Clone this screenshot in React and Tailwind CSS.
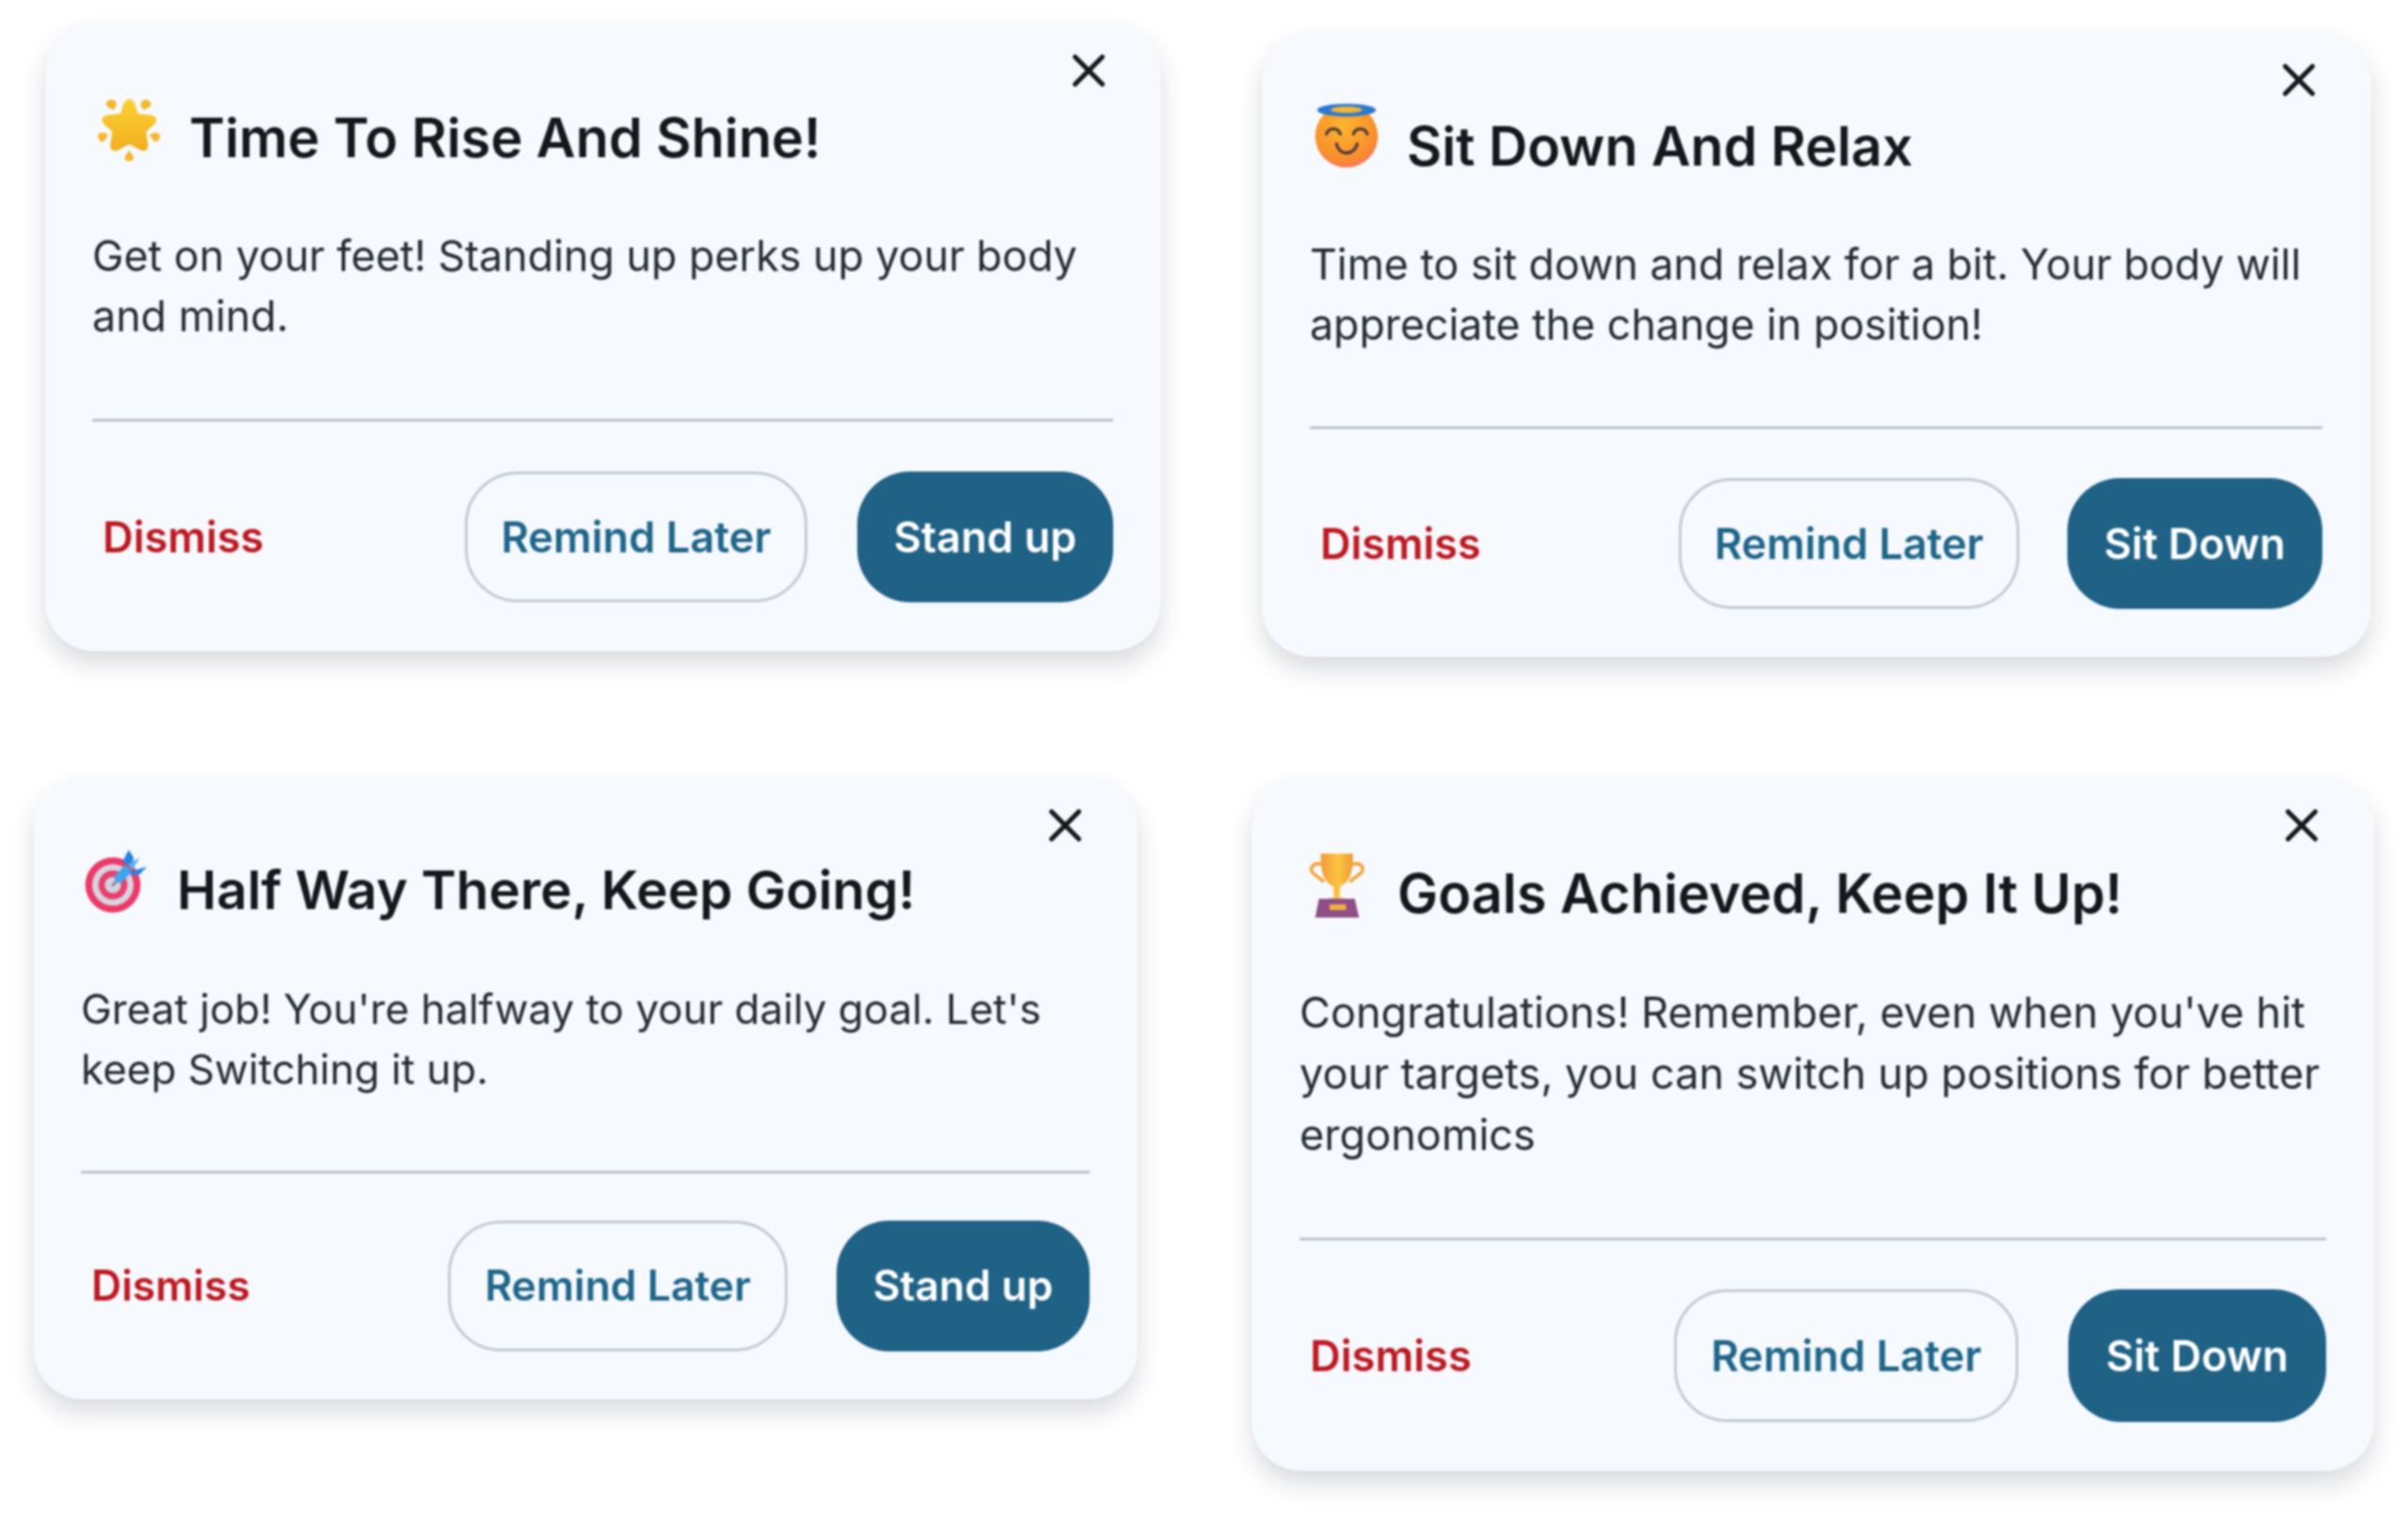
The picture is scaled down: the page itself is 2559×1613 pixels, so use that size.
import React from "react";
import { X } from "lucide-react";

const StarIcon = () => (
  <svg viewBox="54 36 216 216" className="w-[72px] h-[72px] shrink-0 overflow-visible">
    <defs>
      <linearGradient id="starFill" x1="0" y1="0" x2="0" y2="1">
        <stop offset="0" stopColor="#f9d235" />
        <stop offset="1" stopColor="#f3ae1f" />
      </linearGradient>
    </defs>
    <path
      d="M172 46 C184 46 190 60 194 72 L200 92 L240 97 C260 100 264 114 252 126 L226 150 L232 188 C234 208 222 216 206 208 L172 190 L138 208 C122 216 110 208 112 188 L118 150 L92 126 C80 114 84 100 104 97 L144 92 L150 72 C154 60 160 46 172 46 Z"
      fill="url(#starFill)"
    />
    <path d="M98 62 C100 48 118 44 126 52 C134 60 132 70 122 80 C112 76 102 72 98 62 Z" fill="#f4b82b" />
    <path d="M242 62 C240 48 222 44 214 52 C206 60 208 70 218 80 C228 76 238 72 242 62 Z" fill="#f4b82b" />
    <path d="M72 160 C80 150 96 152 104 160 C100 172 92 182 84 182 C76 180 72 170 72 160 Z" fill="#f4b82b" />
    <path d="M270 160 C262 150 246 152 238 160 C242 172 250 182 258 182 C266 180 270 170 270 160 Z" fill="#f4b82b" />
    <path d="M172 210 C178 218 188 230 186 238 C180 246 164 246 158 238 C156 230 166 218 172 210 Z" fill="#f4b82b" />
  </svg>
);

const HaloIcon = () => (
  <svg viewBox="63 54 216 216" className="w-[72px] h-[72px] shrink-0 overflow-visible">
    <defs>
      <radialGradient id="faceFill" cx="0.45" cy="0.35" r="0.75">
        <stop offset="0" stopColor="#fdb52f" />
        <stop offset="0.7" stopColor="#f98e2c" />
        <stop offset="1" stopColor="#f5627a" />
      </radialGradient>
    </defs>
    <circle cx="180" cy="155" r="100" fill="url(#faceFill)" />
    <ellipse cx="180" cy="72" rx="94" ry="20" fill="#2a78d2" />
    <ellipse cx="180" cy="71" rx="50" ry="10" fill="#f7b733" />
    <path d="M116 148 C124 126 152 126 160 148" fill="none" stroke="#4f3a3c" strokeWidth="10" strokeLinecap="round" />
    <path d="M202 148 C210 126 238 126 246 148" fill="none" stroke="#4f3a3c" strokeWidth="10" strokeLinecap="round" />
    <path d="M148 180 C156 218 204 218 214 180" fill="none" stroke="#4f3a3c" strokeWidth="10" strokeLinecap="round" />
  </svg>
);

const TargetIcon = () => (
  <svg viewBox="48 45 216 216" className="w-[72px] h-[72px] shrink-0 overflow-visible">
    <circle cx="150" cy="160" r="88" fill="#ec3a68" />
    <circle cx="150" cy="160" r="66" fill="#d9d3e0" />
    <circle cx="150" cy="160" r="46" fill="#e8406c" />
    <circle cx="150" cy="160" r="26" fill="#d5d0dc" />
    <path d="M150 160 L190 120" stroke="#8c8fa8" strokeWidth="10" strokeLinecap="round" />
    <path d="M156 130 L190 96 L212 118 L176 152 C164 156 152 146 156 130 Z" fill="#3ea6ec" />
    <path d="M180 88 L200 48 L216 72 L212 100 Z" fill="#2384e6" />
    <path d="M204 118 L258 102 L236 126 L214 128 Z" fill="#2384e6" />
    <path d="M198 96 L236 72 L212 112 Z" fill="#56b0f0" />
  </svg>
);

const TrophyIcon = () => (
  <svg viewBox="30 30 216 216" className="w-[72px] h-[72px] shrink-0 overflow-visible">
    <defs>
      <linearGradient id="cupFill" x1="0" y1="0" x2="1" y2="0">
        <stop offset="0" stopColor="#f29a38" />
        <stop offset="0.55" stopColor="#fcc53f" />
        <stop offset="1" stopColor="#ef9a36" />
      </linearGradient>
    </defs>
    <path d="M100 70 C66 62 58 92 80 104 L108 126" fill="none" stroke="#f3a53c" strokeWidth="11" />
    <path d="M198 70 C236 62 240 92 218 104 L190 126" fill="none" stroke="#f3a53c" strokeWidth="11" />
    <path d="M98 36 H200 C202 92 192 128 160 140 L158 178 H140 L138 140 C106 128 96 92 98 36 Z" fill="url(#cupFill)" />
    <path d="M126 178 H172 L176 186 H122 Z" fill="#f0a030" />
    <path d="M92 180 H206 L220 240 H80 Z" fill="#8f4f86" />
    <rect x="126" y="198" width="52" height="18" fill="#f0b23c" />
  </svg>
);

const NudgeCard = ({ className, headClass, titleClass, bodyClass, lineClass, rowClass, remindClass, actionClass, icon, title, body, action }) => (
  <div className={`relative shrink-0 flex flex-col bg-[#f6f9fe] rounded-[52px] shadow-[0_14px_26px_rgba(40,50,70,0.17),0_1px_3px_rgba(40,50,70,0.05)] font-['Inter',sans-serif] ${className}`}>
    <button className="absolute top-[22px] right-[48px] text-[#15181c]">
      <X size={58} strokeWidth={2.1} />
    </button>

    <div className={`flex items-start ${headClass}`}>
      {icon}
      <h3 className={`mt-[9px] leading-[70px] font-semibold text-[#14171b] ${titleClass}`}>
        {title}
      </h3>
    </div>

    <p className={`mt-[59px] text-[#262b31] ${bodyClass}`}>{body}</p>

    <div className={`h-[3px] shrink-0 bg-[#bfc4cd] ${lineClass}`} />

    <div className={`flex items-center justify-between ${rowClass}`}>
      <button className="pl-[11px] font-semibold text-[#bd1a22]">Dismiss</button>
      <div className="flex items-center">
        <button className={`rounded-[56px] border-[3px] border-[#c5cad2] font-semibold text-[#1f6689] ${remindClass}`}>
          Remind Later
        </button>
        <button className={`rounded-[56px] bg-[#1f6286] font-semibold text-white ${actionClass}`}>
          {action}
        </button>
      </div>
    </div>
  </div>
);

export default function App() {
  return (
    <div className="w-[2559px] h-[1613px] bg-white overflow-hidden">
      <div className="blur-[0.8px]">
        <div className="flex items-start">
          <NudgeCard
            className="ml-[48px] mt-[24px] w-[1186px] pl-[50px] pr-[51px] pt-[78px] pb-[52px]"
            headClass="gap-[31px]"
            titleClass="text-[57.5px]"
            bodyClass="text-[44.8px] leading-[64px]"
            lineClass="mt-[77px] mb-[53px]"
            rowClass="text-[45.2px]"
            remindClass="w-[364px] h-[139px]"
            actionClass="ml-[53px] w-[272px] h-[139px]"
            icon={<StarIcon />}
            title="Time To Rise And Shine!"
            body="Get on your feet! Standing up perks up your body and mind."
            action="Stand up"
          />
          <NudgeCard
            className="ml-[107px] mt-[34px] w-[1179px] pl-[51px] pr-[52px] pt-[77px] pb-[51px]"
            headClass="gap-[31px]"
            titleClass="text-[57.3px]"
            bodyClass="text-[44.7px] leading-[64px]"
            lineClass="mt-[76px] mb-[52px]"
            rowClass="text-[45px]"
            remindClass="w-[362px] h-[139px]"
            actionClass="ml-[51px] w-[271px] h-[139px]"
            icon={<HaloIcon />}
            title="Sit Down And Relax"
            body="Time to sit down and relax for a bit. Your body will appreciate the change in position!"
            action="Sit Down"
          />
        </div>
        <div className="flex items-start mt-[128px]">
          <NudgeCard
            className="ml-[36px] w-[1173px] pl-[50px] pr-[51px] pt-[76px] pb-[51px]"
            headClass="gap-[30px]"
            titleClass="text-[56.6px]"
            bodyClass="text-[44px] leading-[64px]"
            lineClass="mt-[76px] mb-[50px]"
            rowClass="text-[44.5px]"
            remindClass="w-[361px] h-[139px]"
            actionClass="ml-[52px] w-[269px] h-[139px]"
            icon={<TargetIcon />}
            title="Half Way There, Keep Going!"
            body="Great job! You're halfway to your daily goal. Let's keep Switching it up."
            action="Stand up"
          />
          <NudgeCard
            className="ml-[121px] w-[1193px] pl-[51px] pr-[51px] pt-[79px] pb-[52px]"
            headClass="gap-[32px]"
            titleClass="text-[57.6px]"
            bodyClass="text-[45.1px] leading-[65px]"
            lineClass="mt-[77px] mb-[52px]"
            rowClass="text-[45.3px]"
            remindClass="w-[366px] h-[141px]"
            actionClass="ml-[53px] w-[274px] h-[141px]"
            icon={<TrophyIcon />}
            title="Goals Achieved, Keep It Up!"
            body="Congratulations! Remember, even when you've hit your targets, you can switch up positions for better ergonomics"
            action="Sit Down"
          />
        </div>
      </div>
    </div>
  );
}
